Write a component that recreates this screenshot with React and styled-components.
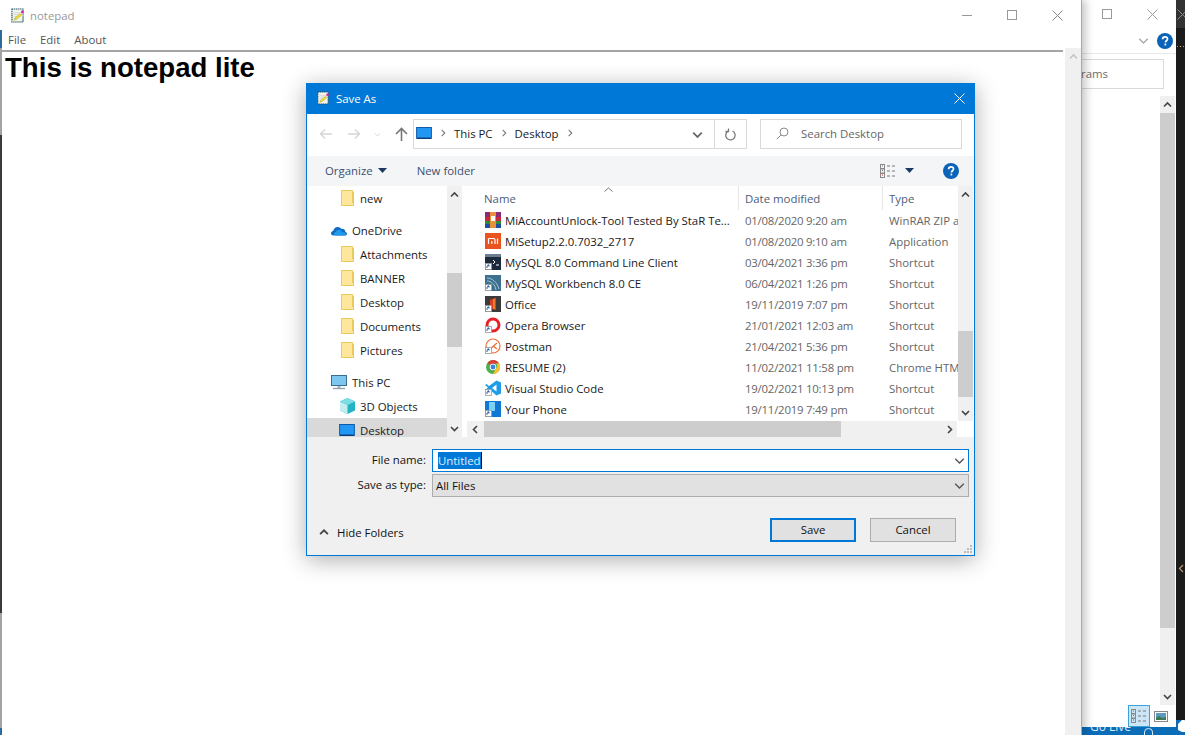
import React from 'react';
import styled, { createGlobalStyle } from 'styled-components';

const GlobalStyle = createGlobalStyle`
  html, body { margin: 0; padding: 0; background: #fff; overflow: hidden; }
  * { box-sizing: border-box; }
`;

const uiFont = `"Open Sans", "Noto Sans", "Liberation Sans", sans-serif`;
const uiSize = '11.4px';

const Desktop = styled.div`
  position: relative;
  width: 1185px;
  height: 735px;
  overflow: hidden;
  background: #1b1b1b;
  font-family: ${uiFont};
`;

/* editor strip far right, mostly hidden */
const DarkStrip = styled.div`
  position: absolute;
  left: 1176px;
  top: 0;
  width: 9px;
  height: 720px;
  display: flex;
  flex-direction: column;
  overflow: hidden;
`;
const StripTop = styled.div`
  height: 28px;
  background: #333;
  padding: 9px 0 0 1px;
  line-height: 0;
  flex: none;
`;
const StripDots = styled.div`
  margin: 18px 0 0 1px;
  display: flex;
  gap: 2px;
  flex: none;
`;
const StripDot = styled.div`
  width: 1px;
  height: 1px;
  background: ${p => p.$color};
`;
const StripArrow = styled.div`
  margin: 517px 0 0 1px;
  line-height: 0;
  flex: none;
`;

/* window behind the notepad */
const BackStatus = styled.div`
  position: absolute;
  left: 1081px;
  top: 720px;
  width: 104px;
  height: 15px;
  background: #0b6cb8;
  color: #dfeaf4;
  font-size: 12px;
  line-height: 14px;
  padding-left: 9px;
  overflow: hidden;
`;
const StatusUser = styled.div`
  position: absolute;
  left: 63px;
  top: 8px;
  line-height: 0;
`;
const StatusBell = styled.div`
  position: absolute;
  left: 96px;
  top: 0;
  line-height: 0;
`;
const BackWindow = styled.div`
  position: absolute;
  left: 1000px;
  top: 0;
  width: 176px;
  height: 727px;
  background: #fff;
  display: flex;
  flex-direction: column;
`;
const BackControls = styled.div`
  height: 28px;
  display: flex;
  justify-content: flex-end;
  align-items: center;
  gap: 35px;
  padding-right: 18px;
  flex: none;
`;
const BackHelpRow = styled.div`
  height: 26px;
  display: flex;
  justify-content: flex-end;
  align-items: center;
  gap: 8px;
  padding-right: 3px;
  border-bottom: 1px solid #e8e8e8;
  flex: none;
`;
const BackSearch = styled.div`
  margin: 5px 12px 0 0;
  height: 30px;
  border: 1px solid #d9d9d9;
  font-size: ${uiSize};
  color: #6d6d6d;
  line-height: 28px;
  text-align: right;
  padding-right: 55px;
  flex: none;
`;
const BackBody = styled.div`
  flex: 1;
  display: flex;
  justify-content: flex-end;
  margin: 7px 1px 22px 0;
  min-height: 0;
`;
const ViewToggles = styled.div`
  position: absolute;
  left: 1128px;
  top: 705px;
  display: flex;
  align-items: center;
  gap: 4px;
`;
const ViewButton = styled.div`
  width: ${p => (p.$active ? '22px' : '14px')};
  height: ${p => (p.$active ? '22px' : '11px')};
  display: flex;
  align-items: center;
  justify-content: center;
  background: ${p => (p.$active ? '#cde6f7' : 'transparent')};
  border: ${p => (p.$active ? '1px solid #3ba3dc' : 'none')};
`;

/* notepad */
const NotepadWindow = styled.div`
  position: absolute;
  left: 0;
  top: 0;
  width: 1082px;
  height: 735px;
  background: #fff;
  border-right: 1px solid #a8a8a8;
  box-shadow: 4px 0 8px rgba(0, 0, 0, 0.22);
  display: flex;
  flex-direction: column;

  &::before {
    content: '';
    position: absolute;
    left: 0;
    top: 0;
    width: 2px;
    height: 100%;
    background: linear-gradient(
      to bottom,
      #fff 0 30px,
      #2b6a9a 30px 48px,
      #a3a3a3 48px 135px,
      #3a3a3a 135px 613px,
      #a3a3a3 613px 728px,
      #2b6a9a 728px
    );
  }
`;
const TitleBar = styled.div`
  height: 30px;
  display: flex;
  align-items: center;
  padding-left: 11px;
  gap: 6px;
  font-size: ${uiSize};
  color: #999;
  flex: none;
`;
const WindowControls = styled.div`
  margin-left: auto;
  display: flex;
  align-items: center;
  gap: 35px;
  padding-right: 18px;
`;
const MenuBar = styled.div`
  height: 20px;
  display: flex;
  align-items: center;
  gap: 14px;
  padding: 0 0 1px 8px;
  font-size: ${uiSize};
  color: #555;
  flex: none;
`;
const NotepadBody = styled.div`
  flex: 1;
  display: flex;
  min-height: 0;
`;
const Editor = styled.div`
  flex: 1;
  border-top: 2px solid #a5a5a5;
  margin-right: 2px;
  padding-left: 5px;
`;
const Heading = styled.h1`
  margin: 0;
  font: bold 27.6px/31px "Liberation Sans", Arial, sans-serif;
  color: #000;
`;
const Track = styled.div`
  width: ${p => p.$w || 16}px;
  margin-top: ${p => p.$lift ? `-${p.$lift}px` : '0'};
  margin-bottom: ${p => p.$mb || 0}px;
  background: #f0f0f0;
  display: flex;
  flex-direction: column;
  align-items: center;
  flex: none;
`;
const Thumb = styled.div`
  background: #cdcdcd;
  align-self: stretch;
  height: ${p => p.$h}px;
  margin-top: ${p => p.$top || 0}px;
`;
const TrackArrow = styled.div`
  height: 17px;
  display: flex;
  align-items: center;
  justify-content: center;
  margin-top: ${p => (p.$end ? 'auto' : '0')};
  flex: none;
`;

/* save dialog */
const Dialog = styled.div`
  position: absolute;
  left: 306px;
  top: 83px;
  width: 669px;
  height: 473px;
  background: #f0f0f0;
  border: 1px solid #0078d7;
  box-shadow: 0 4px 22px rgba(0, 0, 0, 0.32);
  display: flex;
  flex-direction: column;
`;
const DialogTitle = styled.div`
  height: 30px;
  background: #0078d7;
  color: #fff;
  display: flex;
  align-items: center;
  font-size: ${uiSize};
  padding: 0 9px 2px 10px;
  gap: 7px;
  flex: none;
`;
const CloseSlot = styled.div`
  margin-left: auto;
  display: flex;
`;
const NavRow = styled.div`
  height: 42px;
  background: #fff;
  display: flex;
  align-items: center;
  padding: 0 12px 2px 12px;
  flex: none;
`;
const NavArrows = styled.div`
  width: 94px;
  display: flex;
  align-items: center;
  gap: 13.5px;
  flex: none;
`;
const AddressBox = styled.div`
  width: 334px;
  height: 30px;
  border: 1px solid #d9d9d9;
  display: flex;
  align-items: center;
  font-size: ${uiSize};
  color: #1a1a1a;
  flex: none;
`;
const Crumbs = styled.div`
  flex: 1;
  display: flex;
  align-items: center;
  gap: 7px;
  padding: 0 0 2px 2px;
`;
const AddressButton = styled.div`
  height: 100%;
  width: ${p => p.$w}px;
  display: flex;
  align-items: center;
  justify-content: center;
  border-left: ${p => (p.$divider ? '1px solid #d9d9d9' : 'none')};
`;
const SearchBox = styled.div`
  margin-left: 13px;
  width: 202px;
  height: 30px;
  border: 1px solid #d9d9d9;
  display: flex;
  align-items: center;
  gap: 12px;
  padding: 0 0 2px 15px;
  font-size: ${uiSize};
  color: #666;
`;
const CommandBar = styled.div`
  height: 30px;
  background: #f4f5f7;
  display: flex;
  align-items: center;
  padding: 0 15px 1px 18px;
  font-size: ${uiSize};
  color: #3c5070;
  flex: none;
`;
const CommandItem = styled.div`
  display: flex;
  align-items: center;
  gap: 5px;
  margin-right: 30px;
`;
const CommandRight = styled.div`
  margin-left: auto;
  display: flex;
  align-items: center;
`;
const CommandGap = styled.div`
  width: ${p => p.$w}px;
`;
const Browser = styled.div`
  height: 251px;
  background: #fff;
  display: flex;
  flex: none;
`;
const NavPane = styled.div`
  width: 140px;
  overflow: hidden;
  flex: none;
`;
const NavItem = styled.div`
  height: 24px;
  display: flex;
  align-items: center;
  padding-left: ${p => p.$indent}px;
  margin-bottom: ${p => p.$gap || 0}px;
  background: ${p => (p.$selected ? '#d9d9d9' : 'transparent')};
  font-size: ${uiSize};
  color: #1a1a1a;
  gap: ${p => p.$space || 6}px;
`;
const PaneGap = styled.div`
  width: 5px;
  flex: none;
`;
const FilePane = styled.div`
  width: 491px;
  display: flex;
  flex-direction: column;
  flex: none;
  position: relative;
`;
const FileHeader = styled.div`
  height: 24px;
  display: grid;
  grid-template-columns: 271px 144px 76px;
  font-size: ${uiSize};
  color: #4c607a;
  flex: none;
`;
const HeaderCell = styled.div`
  padding: 5px 0 0 ${p => p.$pad || 6}px;
  border-left: ${p => (p.$first ? 'none' : '1px solid #e5e5e5')};
  white-space: nowrap;
  overflow: hidden;
`;
const SortCaret = styled.div`
  position: absolute;
  left: 137px;
  top: 0;
  line-height: 0;
`;
const FileList = styled.div`
  flex: 1;
  min-height: 0;
`;
const FileRow = styled.div`
  height: 21px;
  padding-bottom: 1px;
  display: grid;
  grid-template-columns: 271px 144px 76px;
  align-items: center;
  font-size: ${uiSize};
`;
const NameCell = styled.div`
  display: flex;
  align-items: center;
  gap: 4px;
  padding-left: 18px;
  color: #1a1a1a;
  white-space: nowrap;
  overflow: hidden;

  svg { flex: none; }
`;
const MetaCell = styled.div`
  padding-left: 7px;
  color: #666;
  letter-spacing: ${p => (p.$date ? '-0.22px' : '0')};
  white-space: nowrap;
  overflow: hidden;
`;
const HScroll = styled.div`
  height: 16px;
  margin-right: 1px;
  background: #f0f0f0;
  display: flex;
  align-items: center;
  flex: none;
`;
const HThumb = styled.div`
  width: 357px;
  height: 100%;
  background: #cdcdcd;
`;
const HArrow = styled.div`
  width: ${p => (p.$end ? 16 : 17)}px;
  height: 100%;
  display: flex;
  align-items: center;
  justify-content: center;
  margin-left: ${p => (p.$end ? 'auto' : '0')};
`;
const SaveArea = styled.div`
  flex: 1;
  background: #f0f0f0;
  display: flex;
  flex-direction: column;
  padding: 12px 5px 0 0;
  position: relative;
`;
const FieldRow = styled.div`
  display: flex;
  align-items: center;
  height: 23px;
  margin-bottom: 2px;
`;
const FieldLabel = styled.label`
  width: 125px;
  padding: 0 6px 2px 0;
  text-align: right;
  font-size: ${uiSize};
  color: #111;
  flex: none;
`;
const FieldBox = styled.div`
  flex: 1;
  height: 23px;
  border: 1px solid ${p => (p.$focus ? '#0078d7' : '#adadad')};
  background: ${p => (p.$focus ? '#fff' : '#e1e1e1')};
  display: flex;
  align-items: center;
  justify-content: space-between;
  padding: 0 3px 1px ${p => (p.$focus ? 5 : 3)}px;
  font-size: ${uiSize};
  color: #111;
`;
const SelectedText = styled.span`
  background: #0078d7;
  color: #dfefff;
  line-height: 17px;
  border-right: 1px solid #111;
`;
const BottomRow = styled.div`
  display: flex;
  align-items: center;
  margin-top: 19px;
  padding-left: 12px;
`;
const HideFolders = styled.div`
  display: flex;
  align-items: center;
  gap: 8px;
  padding-top: 4px;
  font-size: ${uiSize};
  color: #111;
`;
const Actions = styled.div`
  margin-left: auto;
  display: flex;
  gap: 14px;
  padding-right: 13px;
`;
const DialogButton = styled.button`
  width: 86px;
  height: 24px;
  background: #e1e1e1;
  border: ${p => (p.$primary ? '2px solid #0078d7' : '1px solid #adadad')};
  font: ${uiSize} ${uiFont};
  color: #111;
  padding: 0 0 2px;
`;
const Grip = styled.div`
  position: absolute;
  right: 1px;
  bottom: 1px;
  line-height: 0;
`;

const Chevron = ({ dir = 'up', color = '#444', size = 9, w = 1.6 }) => {
  const paths = {
    up: 'M1 6.5 4.5 3 8 6.5',
    down: 'M1 3 4.5 6.5 8 3',
    left: 'M6 1 2.5 4.5 6 8',
    right: 'M3 1 6.5 4.5 3 8',
  };
  return (
    <svg width={size} height={size} viewBox="0 0 9 9" fill="none" stroke={color} strokeWidth={w}>
      <path d={paths[dir]} />
    </svg>
  );
};

const CloseIcon = ({ color = '#888', size = 11 }) => (
  <svg width={size} height={size} viewBox="0 0 11 11" stroke={color} fill="none" strokeWidth="1">
    <path d="M.5.5 10.500 10.500M10.500.5.5 10.500" />
  </svg>
);

const MaxIcon = () => (
  <svg width="10" height="10" viewBox="0 0 10 10" fill="none" stroke="#999">
    <rect x=".5" y=".5" width="9" height="9" />
  </svg>
);

const MinIcon = () => (
  <svg width="10" height="10" viewBox="0 0 10 10" stroke="#999">
    <path d="M0 5.500h10" />
  </svg>
);

const HelpIcon = ({ size = 16 }) => (
  <svg width={size} height={size} viewBox="0 0 16 16">
    <circle cx="8" cy="8" r="8" fill="#0a63b8" />
    <path d="M5.600 6.200c0-1.500 1-2.400 2.500-2.400s2.400.9 2.400 2.100c0 1.900-2 1.800-2 3.500" fill="none" stroke="#fff" strokeWidth="1.700" />
    <rect x="7.500" y="10.600" width="1.700" height="1.800" fill="#fff" />
  </svg>
);

const NotepadIcon = ({ size = 13 }) => (
  <svg width={size} height={size + 2} viewBox="0 0 14 16">
    <rect x="1" y="1" width="12" height="14" fill="#f3f3ee" stroke="#1f5060" strokeWidth="1.200" strokeDasharray="1.500 .7" />
    <path d="M3 5h8M3 7h8M3 9h5M3 11h4" stroke="#d5d5d5" />
    <path d="M3.500 13l1-2.500 5.500-4.500 1.500 1.500-5.500 4.500z" fill="#f5e32a" stroke="#a69a10" strokeWidth=".5" />
    <rect x="11" y="3" width="2.500" height="2.500" fill="#e0189a" />
  </svg>
);

const Folder = () => (
  <svg width="13" height="16" viewBox="0 0 13 16">
    <path d="M.5.5h11v1.500h1v13.500H.5z" fill="#fde79c" stroke="#e8c95c" />
    <path d="M11.500 2v11" stroke="#e8c95c" />
  </svg>
);

const DesktopIcon = ({ size = 16 }) => (
  <svg width={size} height={size * 0.8} viewBox="0 0 16 13">
    <rect x=".5" y=".5" width="15" height="11" fill="#2196f3" stroke="#0d5aa7" />
    <path d="M1 11.500h14" stroke="#0c3c75" strokeWidth="1.400" />
  </svg>
);

const Cloud = () => (
  <svg width="16" height="11" viewBox="0 0 16 11">
    <path d="M2.500 10.500C.8 10.500 0 9.300 0 8.200 0 7 .9 6 2.200 5.900 2.800 3.400 4.500 2 6.700 2c1.500 0 2.800.7 3.500 1.900 2.400-.3 4 1 4.200 3 1 .2 1.600.9 1.600 1.800 0 1-.8 1.800-1.900 1.800z" fill="#0f6cc4" />
    <path d="M5 10.500c-1.300 0-2-.8-2-1.700 0-1 .8-1.700 1.800-1.700.5-1.500 1.800-2.300 3.200-2.300 1.600 0 2.800 1 3.100 2.400 1.900 0 3.900.6 3.900 1.800 0 .9-.8 1.500-1.900 1.500z" fill="#1f9ae8" />
  </svg>
);

const MonitorIcon = () => (
  <svg width="16" height="15" viewBox="0 0 16 15">
    <rect x=".5" y=".5" width="15" height="10" fill="#7cc7f0" stroke="#3a6e94" />
    <path d="M6.500 11h3v2h-3z" fill="#a7b7c4" />
    <path d="M2 13.500h12" stroke="#8fa3b3" strokeWidth="1.400" />
  </svg>
);

const CubeIcon = () => (
  <svg width="17" height="16" viewBox="0 0 17 16">
    <path d="M8.500 0 16 3.500v9L8.500 16 1 12.500v-9z" fill="#21b4c4" />
    <path d="M1 3.500 8.500 7v9L1 12.500z" fill="#c5ecef" />
    <path d="M8.500 7 16 3.500 8.500 0 1 3.500z" fill="#7edce4" />
  </svg>
);

const ShortcutBadge = () => (
  <>
    <rect x=".5" y="9.500" width="6" height="6" fill="#fff" stroke="#9a9a9a" strokeWidth=".8" />
    <path d="M2 14v-2l2-1M4 11v1.600M4 11H2.600" stroke="#1c4f9c" fill="none" strokeWidth=".9" />
  </>
);

const FILE_ICONS = {
  winrar: (
    <>
      <rect width="16" height="5" fill="#8a2a78" />
      <rect y="5" width="16" height="4" fill="#c62a36" />
      <rect y="9" width="16" height="3" fill="#2e8b3d" />
      <rect y="12" width="16" height="4" fill="#1f4f9e" />
      <rect x="5" width="6" height="16" fill="#e8913a" />
      <rect x="6" y="4" width="4" height="5" fill="#fff" />
    </>
  ),
  mi: (
    <>
      <rect width="16" height="16" fill="#e9531d" />
      <path d="M3.500 5.500h5a1.500 1.500 0 0 1 1.500 1.500v4M3.500 5.500V11M6.800 8v3M12.500 5.500V11" stroke="#fff" fill="none" strokeWidth="1.200" />
    </>
  ),
  mysqlCmd: (
    <>
      <rect width="16" height="16" fill="#1c2b3b" />
      <rect width="16" height="3" fill="#6b7f91" />
      <path d="M8 6l2 2-2 2M11 11h3" stroke="#fff" fill="none" />
      <ShortcutBadge />
    </>
  ),
  workbench: (
    <>
      <rect width="16" height="16" fill="#3d6f8f" />
      <path d="M2 3c5 0 10 4 12 11" stroke="#a7c8da" fill="none" />
      <path d="M2 6c4 0 8 3 9 9" stroke="#a7c8da" fill="none" />
      <ShortcutBadge />
    </>
  ),
  office: (
    <>
      <rect width="16" height="16" fill="#3b3b3b" />
      <path d="M5 4 11 1.500V14L5 12.500z" fill="#d8401e" />
      <path d="M8 3h2v10H8z" fill="#f07b2e" />
      <ShortcutBadge />
    </>
  ),
  opera: (
    <>
      <circle cx="8" cy="8" r="6" fill="none" stroke="#e8202a" strokeWidth="3" />
      <ShortcutBadge />
    </>
  ),
  postman: (
    <>
      <circle cx="8" cy="8" r="7" fill="#fff" stroke="#ef6c35" strokeWidth="1.200" />
      <path d="M4 12 12 5M8 8l4 3" stroke="#ef6c35" fill="none" strokeWidth="1.200" />
      <ShortcutBadge />
    </>
  ),
  chrome: (
    <>
      <circle cx="8" cy="8" r="7" fill="#4caf50" />
      <path d="M8 1a7 7 0 0 1 6.100 3.500H8A3.500 3.500 0 0 0 4.800 6.500L2.700 3.500A7 7 0 0 1 8 1z" fill="#e53935" />
      <path d="M14.100 4.500A7 7 0 0 1 8 15l3-5.500a3.500 3.500 0 0 0 0-5z" fill="#fbc02d" />
      <circle cx="8" cy="8" r="3.200" fill="#fff" />
      <circle cx="8" cy="8" r="2.400" fill="#3f7fe0" />
    </>
  ),
  vscode: (
    <>
      <path d="M11.500.5 16 2.500v11l-4.500 2L4 9l-2.500 2L0 10l3-2.500L0 5l1.500-1L4 6z" fill="#1f9ce8" />
      <path d="M11.500 4.500 7 8l4.500 3.500z" fill="#fff" />
      <ShortcutBadge />
    </>
  ),
  phone: (
    <>
      <rect width="16" height="16" fill="#0f78d4" />
      <rect x="4" y="1" width="6" height="9" fill="#7fd0f5" />
      <ShortcutBadge />
    </>
  ),
};

const FileIcon = ({ kind }) => (
  <svg width="16" height="16" viewBox="0 0 16 16">
    {FILE_ICONS[kind]}
  </svg>
);

const files = [
  { kind: 'winrar', name: 'MiAccountUnlock-Tool Tested By StaR Te...', date: '01/08/2020 9:20 am', type: 'WinRAR ZIP archive' },
  { kind: 'mi', name: 'MiSetup2.2.0.7032_2717', date: '01/08/2020 9:10 am', type: 'Application' },
  { kind: 'mysqlCmd', name: 'MySQL 8.0 Command Line Client', date: '03/04/2021 3:36 pm', type: 'Shortcut' },
  { kind: 'workbench', name: 'MySQL Workbench 8.0 CE', date: '06/04/2021 1:26 pm', type: 'Shortcut' },
  { kind: 'office', name: 'Office', date: '19/11/2019 7:07 pm', type: 'Shortcut' },
  { kind: 'opera', name: 'Opera Browser', date: '21/01/2021 12:03 am', type: 'Shortcut' },
  { kind: 'postman', name: 'Postman', date: '21/04/2021 5:36 pm', type: 'Shortcut' },
  { kind: 'chrome', name: 'RESUME (2)', date: '11/02/2021 11:58 pm', type: 'Chrome HTML Document' },
  { kind: 'vscode', name: 'Visual Studio Code', date: '19/02/2021 10:13 pm', type: 'Shortcut' },
  { kind: 'phone', name: 'Your Phone', date: '19/11/2019 7:49 pm', type: 'Shortcut' },
];

const ArrowLine = ({ dir, color }) => (
  <svg width="14" height="12" viewBox="0 0 14 12" fill="none" stroke={color} strokeWidth="1.300">
    <path d={dir === 'left' ? 'M13 6H1.500M6 1.500 1.500 6 6 10.500' : 'M1 6h11.500M8 1.500 12.500 6 8 10.500'} />
  </svg>
);

const ViewsIcon = () => (
  <svg width="16" height="14" viewBox="0 0 16 14" fill="none">
    <rect x=".5" y=".5" width="4" height="4" stroke="#8a8a8a" />
    <rect x=".5" y="5" width="4" height="4" stroke="#8a8a8a" />
    <rect x=".5" y="9.500" width="4" height="4" stroke="#8a8a8a" />
    <path d="M2 2h1M2 6.500h1" stroke="#777" />
    <path d="M2 11h1" stroke="#d22" />
    <path d="M7 2h3M12 2h3M7 7h3M12 7h3M7 12h3M12 12h3" stroke="#777" />
  </svg>
);

const Caret = ({ color = '#1b3a63' }) => (
  <svg width="9" height="5" viewBox="0 0 9 5">
    <path d="M0 0h9L4.500 5z" fill={color} />
  </svg>
);

const App = () => (
  <Desktop>
    <GlobalStyle />

    <DarkStrip>
      <StripTop><CloseIcon color="#8a8a8a" /></StripTop>
      <StripDots>
        <StripDot $color="#e58a8a" />
        <StripDot $color="#d9c27a" />
        <StripDot $color="#8ab4e5" />
      </StripDots>
      <StripArrow><Chevron dir="left" color="#b89a72" size={9} w={1.2} /></StripArrow>
    </DarkStrip>

    <BackStatus>
      Go Live
      <StatusUser>
        <svg width="9" height="7" viewBox="0 0 9 7" fill="none" stroke="#dfeaf4"><path d="M.5 7V4a4 3.500 0 0 1 8 0v3" /></svg>
      </StatusUser>
      <StatusBell>
        <svg width="9" height="14" viewBox="0 0 9 14"><path d="M5 0a5 5 0 0 1 4 1v11H5L1 10V4z" fill="#fff" /></svg>
      </StatusBell>
    </BackStatus>

    <BackWindow>
      <BackControls>
        <MaxIcon />
        <CloseIcon color="#999" />
      </BackControls>
      <BackHelpRow>
        <Chevron dir="down" color="#aaa" size={11} w={1.1} />
        <HelpIcon />
      </BackHelpRow>
      <BackSearch>Programs</BackSearch>
      <BackBody>
        <Track $w={15}>
          <TrackArrow><Chevron dir="up" /></TrackArrow>
          <Thumb $h={515} />
          <TrackArrow $end><Chevron dir="down" /></TrackArrow>
        </Track>
      </BackBody>
    </BackWindow>
    <ViewToggles>
      <ViewButton $active><ViewsIcon /></ViewButton>
      <ViewButton>
        <svg width="14" height="11" viewBox="0 0 14 11">
          <rect x=".5" y=".5" width="13" height="10" fill="#fff" stroke="#888" />
          <rect x="2" y="2" width="10" height="7" fill="#5b9bc4" />
          <path d="M2 9V6.500l3-1.500 3 2 4-1v3z" fill="#3f7a55" />
        </svg>
      </ViewButton>
    </ViewToggles>

    <NotepadWindow>
      <TitleBar>
        <NotepadIcon />
        notepad
        <WindowControls>
          <MinIcon />
          <MaxIcon />
          <CloseIcon />
        </WindowControls>
      </TitleBar>
      <MenuBar>
        <span>File</span>
        <span>Edit</span>
        <span>About</span>
      </MenuBar>
      <NotepadBody>
        <Editor>
          <Heading>This is notepad lite</Heading>
        </Editor>
        <Track $w={16} $lift={2}>
          <TrackArrow><Chevron dir="up" color="#c4c4c4" /></TrackArrow>
        </Track>
      </NotepadBody>
    </NotepadWindow>

    <Dialog>
      <DialogTitle>
        <NotepadIcon size={12} />
        Save As
        <CloseSlot><CloseIcon color="#fff" /></CloseSlot>
      </DialogTitle>

      <NavRow>
        <NavArrows>
          <ArrowLine dir="left" color="#d5d5d5" />
          <ArrowLine dir="right" color="#d5d5d5" />
          <Chevron dir="down" color="#d5d5d5" size={7} w={1.2} />
          <svg width="13" height="14" viewBox="0 0 13 14" fill="none" stroke="#777" strokeWidth="1.600">
            <path d="M6.500 14V1.500M1 7l5.500-5.500L12 7" />
          </svg>
        </NavArrows>
        <AddressBox>
          <Crumbs>
            <DesktopIcon />
            <Chevron dir="right" color="#777" size={8} w={1.2} />
            <span>This PC</span>
            <Chevron dir="right" color="#777" size={8} w={1.2} />
            <span>Desktop</span>
            <Chevron dir="right" color="#777" size={8} w={1.2} />
          </Crumbs>
          <AddressButton $w={33}><Chevron dir="down" color="#666" size={11} w={1.4} /></AddressButton>
          <AddressButton $w={32} $divider>
            <svg width="13" height="13" viewBox="0 0 13 13" fill="none" stroke="#777" strokeWidth="1.300">
              <path d="M4 3.200A4.700 4.700 0 1 0 8.500 3M4.500 .5v3h-3" />
            </svg>
          </AddressButton>
        </AddressBox>
        <SearchBox>
          <svg width="13" height="13" viewBox="0 0 13 13" fill="none" stroke="#8a8a8a">
            <circle cx="8" cy="5" r="4" />
            <path d="M5 8 .8 12.200" />
          </svg>
          Search Desktop
        </SearchBox>
      </NavRow>

      <CommandBar>
        <CommandItem>Organize <Caret /></CommandItem>
        <CommandItem>New folder</CommandItem>
        <CommandRight>
          <ViewsIcon />
          <CommandGap $w={9} />
          <Caret />
          <CommandGap $w={29} />
          <HelpIcon />
        </CommandRight>
      </CommandBar>

      <Browser>
        <NavPane>
          <NavItem $indent={34} $gap={8}><Folder /><span>new</span></NavItem>
          <NavItem $indent={24} $space={5}><Cloud /><span>OneDrive</span></NavItem>
          <NavItem $indent={34}><Folder /><span>Attachments</span></NavItem>
          <NavItem $indent={34}><Folder /><span>BANNER</span></NavItem>
          <NavItem $indent={34}><Folder /><span>Desktop</span></NavItem>
          <NavItem $indent={34}><Folder /><span>Documents</span></NavItem>
          <NavItem $indent={34} $gap={8}><Folder /><span>Pictures</span></NavItem>
          <NavItem $indent={24} $space={5}><MonitorIcon /><span>This PC</span></NavItem>
          <NavItem $indent={32} $space={4}><CubeIcon /><span>3D Objects</span></NavItem>
          <NavItem $indent={32} $space={5} $selected><DesktopIcon /><span>Desktop</span></NavItem>
        </NavPane>
        <Track $w={15}>
          <TrackArrow><Chevron dir="up" /></TrackArrow>
          <Thumb $h={74} $top={70} />
          <TrackArrow $end><Chevron dir="down" /></TrackArrow>
        </Track>
        <PaneGap />
        <FilePane>
          <FileHeader>
            <HeaderCell $first $pad={17}>Name</HeaderCell>
            <HeaderCell>Date modified</HeaderCell>
            <HeaderCell>Type</HeaderCell>
          </FileHeader>
          <SortCaret>
            <svg width="9" height="5" viewBox="0 0 9 5" fill="none" stroke="#777"><path d="M.5 4.500 4.500 1l4 3.500" /></svg>
          </SortCaret>
          <FileList>
            {files.map(f => (
              <FileRow key={f.name}>
                <NameCell><FileIcon kind={f.kind} /><span>{f.name}</span></NameCell>
                <MetaCell $date>{f.date}</MetaCell>
                <MetaCell>{f.type}</MetaCell>
              </FileRow>
            ))}
          </FileList>
          <HScroll>
            <HArrow><Chevron dir="left" /></HArrow>
            <HThumb />
            <HArrow $end><Chevron dir="right" /></HArrow>
          </HScroll>
        </FilePane>
        <Track $w={15} $mb={16}>
          <TrackArrow><Chevron dir="up" /></TrackArrow>
          <Thumb $h={66} $top={128} />
          <TrackArrow $end><Chevron dir="down" /></TrackArrow>
        </Track>
      </Browser>

      <SaveArea>
        <FieldRow>
          <FieldLabel>File name:</FieldLabel>
          <FieldBox $focus>
            <SelectedText>Untitled</SelectedText>
            <Chevron dir="down" color="#555" size={11} w={1.1} />
          </FieldBox>
        </FieldRow>
        <FieldRow>
          <FieldLabel>Save as type:</FieldLabel>
          <FieldBox>
            All Files
            <Chevron dir="down" color="#555" size={11} w={1.1} />
          </FieldBox>
        </FieldRow>
        <BottomRow>
          <HideFolders><Chevron dir="up" color="#444" size={10} w={1.6} />Hide Folders</HideFolders>
          <Actions>
            <DialogButton $primary>Save</DialogButton>
            <DialogButton>Cancel</DialogButton>
          </Actions>
        </BottomRow>
        <Grip>
          <svg width="10" height="10" viewBox="0 0 10 10" fill="#bcbcbc">
            <rect x="7" y="1" width="2" height="2" />
            <rect x="4" y="4" width="2" height="2" />
            <rect x="7" y="4" width="2" height="2" />
            <rect x="1" y="7" width="2" height="2" />
            <rect x="4" y="7" width="2" height="2" />
            <rect x="7" y="7" width="2" height="2" />
          </svg>
        </Grip>
      </SaveArea>
    </Dialog>
  </Desktop>
);

export default App;
